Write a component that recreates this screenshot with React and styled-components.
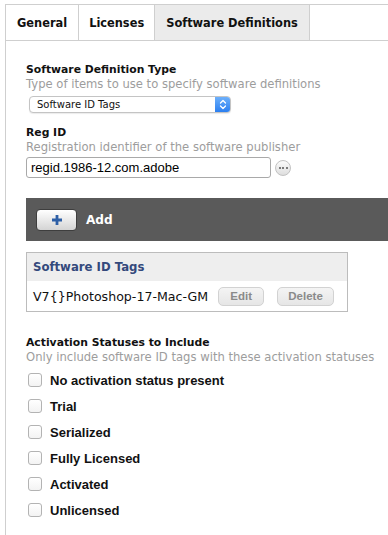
import React from "react";
import styled, { createGlobalStyle } from "styled-components";

const Global = createGlobalStyle`
  html, body { margin: 0; padding: 0; background: #fff; }
  body { font-family: "DejaVu Sans", sans-serif; color: #111; }
  * { box-sizing: border-box; }
`;

const Page = styled.div`
  margin: 4px 0 0 5px;
  min-height: 531px;
  display: flex;
  flex-direction: column;
`;

const TabBar = styled.div`
  display: flex;
  border-top: 1px solid #cfcfcf;
  border-bottom: 1px solid #cfcfcf;
  border-left: 1px solid #cfcfcf;
  height: 37px;
`;

const Tab = styled.div`
  padding: 0 ${(p) => p.$pad || 11}px;
  border-right: 1px solid #cfcfcf;
  background: ${(p) => (p.$active ? "#ebebeb" : "#fff")};
  font-weight: bold;
  font-size: 11.4px;
  line-height: 36px;
  color: #111;
`;

const Content = styled.div`
  flex: 1;
  border-left: 1px solid #cfcfcf;
  padding: 21px 0 14px 20px;
  display: flex;
  flex-direction: column;
`;

const Heading = styled.div`
  font-weight: bold;
  font-size: 10.8px;
  line-height: 15px;
  color: #111;
  margin-top: ${(p) => p.$mt || 0}px;
`;

const Desc = styled.div`
  font-size: 11.6px;
  line-height: 15px;
  color: #9d9d9d;
`;

const SelectBox = styled.div`
  margin: 4px 0 0 3px;
  width: 202px;
  height: 17px;
  border: 1px solid #c4c4c4;
  border-radius: 4px;
  box-shadow: 0 1px 1px rgba(0, 0, 0, 0.08);
  display: flex;
  align-items: stretch;
  background: #fff;
  overflow: hidden;
`;

const SelectText = styled.div`
  flex: 1;
  font-size: 10px;
  line-height: 15px;
  padding-left: 7px;
  color: #111;
`;

const Stepper = styled.div`
  width: 15px;
  background: linear-gradient(#6db0fb, #2b7ff0);
  display: flex;
  align-items: center;
  justify-content: center;
`;

const InputRow = styled.div`
  display: flex;
  align-items: center;
  gap: 4px;
  margin-top: 2px;
`;

const TextInput = styled.div`
  width: 245px;
  height: 21px;
  border: 1px solid #a9a9a9;
  border-radius: 3px;
  font-family: "Liberation Sans", sans-serif;
  font-size: 13px;
  line-height: 19px;
  padding-left: 4px;
  color: #000;
`;

const DotsButton = styled.div`
  width: 16px;
  height: 16px;
  border-radius: 50%;
  border: 1px solid #c2c2c2;
  background: linear-gradient(#fbfbfb, #dedede);
  display: flex;
  align-items: center;
  justify-content: center;
  gap: 1.5px;
`;

const Dot = styled.span`
  width: 2px;
  height: 2px;
  border-radius: 50%;
  background: #555;
`;

const Toolbar = styled.div`
  margin-top: 20px;
  height: 43px;
  background: #5a5a5a;
  display: flex;
  align-items: center;
  padding-left: 10px;
  gap: 9px;
`;

const AddButton = styled.div`
  width: 41px;
  height: 22px;
  border-radius: 4px;
  border: 1px solid #3e3e3e;
  background: linear-gradient(#ffffff, #d4d4d4);
  display: flex;
  align-items: center;
  justify-content: center;
`;

const ToolbarLabel = styled.span`
  font-weight: bold;
  font-size: 12.1px;
  color: #fff;
`;

const ListBox = styled.div`
  margin-top: 11px;
  width: 322px;
  border: 1px solid #bcbcbc;
`;

const ListHeader = styled.div`
  height: 28px;
  background: #eeeeee;
  padding-left: 6px;
  display: flex;
  align-items: center;
  font-weight: bold;
  font-size: 11.7px;
  color: #34497c;
`;

const ListRow = styled.div`
  height: 30px;
  padding-left: 6px;
  display: flex;
  align-items: center;
`;

const ItemName = styled.span`
  font-size: 12.6px;
  color: #111;
  width: 189px;
`;

const SmallButton = styled.div`
  width: ${(p) => p.$w}px;
  height: 19px;
  margin-right: 13px;
  border: 1px solid #d2d2d2;
  border-radius: 5px;
  background: linear-gradient(#f4f4f4, #e6e6e6);
  font-family: "Liberation Sans", sans-serif;
  font-weight: bold;
  font-size: 11.5px;
  color: #8a8a8a;
  display: flex;
  align-items: center;
  justify-content: center;
`;

const CheckList = styled.div`
  margin-top: 2px;
  display: flex;
  flex-direction: column;
`;

const CheckRow = styled.label`
  height: 26px;
  display: flex;
  align-items: center;
  gap: 8px;
  padding-left: 2px;
`;

const Box = styled.span`
  width: 14px;
  height: 14px;
  border: 1px solid #b3b3b3;
  border-radius: 3px;
  background: linear-gradient(#ffffff, #f3f3f3);
`;

const CheckLabel = styled.span`
  font-family: "Liberation Sans", sans-serif;
  font-weight: bold;
  font-size: 13px;
  color: #111;
`;

const statuses = [
  "No activation status present",
  "Trial",
  "Serialized",
  "Fully Licensed",
  "Activated",
  "Unlicensed",
];

export default function App() {
  return (
    <>
      <Global />
      <Page>
        <TabBar>
          <Tab>General</Tab>
          <Tab $pad={10}>Licenses</Tab>
          <Tab $active>Software Definitions</Tab>
        </TabBar>
        <Content>
          <Heading>Software Definition Type</Heading>
          <Desc>Type of items to use to specify software definitions</Desc>
          <SelectBox>
            <SelectText>Software ID Tags</SelectText>
            <Stepper>
              <svg width="8" height="11" viewBox="0 0 8 11">
                <path d="M1.5 4 L4 1.5 L6.5 4 M1.5 7 L4 9.5 L6.5 7" fill="none" stroke="#fff" strokeWidth="1.3" strokeLinecap="round" strokeLinejoin="round" />
              </svg>
            </Stepper>
          </SelectBox>

          <Heading $mt={12}>Reg ID</Heading>
          <Desc>Registration identifier of the software publisher</Desc>
          <InputRow>
            <TextInput>regid.1986-12.com.adobe</TextInput>
            <DotsButton>
              <Dot />
              <Dot />
              <Dot />
            </DotsButton>
          </InputRow>

          <Toolbar>
            <AddButton>
              <svg width="12" height="12" viewBox="0 0 12 12">
                <path d="M6 1 V11 M1 6 H11" stroke="#2d5fa6" strokeWidth="2.8" />
              </svg>
            </AddButton>
            <ToolbarLabel>Add</ToolbarLabel>
          </Toolbar>

          <ListBox>
            <ListHeader>Software ID Tags</ListHeader>
            <ListRow>
              <ItemName>V7{"{}"}Photoshop-17-Mac-GM</ItemName>
              <SmallButton $w={47}>Edit</SmallButton>
              <SmallButton $w={58}>Delete</SmallButton>
            </ListRow>
          </ListBox>

          <Heading $mt={23}>Activation Statuses to Include</Heading>
          <Desc>Only include software ID tags with these activation statuses</Desc>
          <CheckList>
            {statuses.map((s) => (
              <CheckRow key={s}>
                <Box />
                <CheckLabel>{s}</CheckLabel>
              </CheckRow>
            ))}
          </CheckList>
        </Content>
      </Page>
    </>
  );
}
